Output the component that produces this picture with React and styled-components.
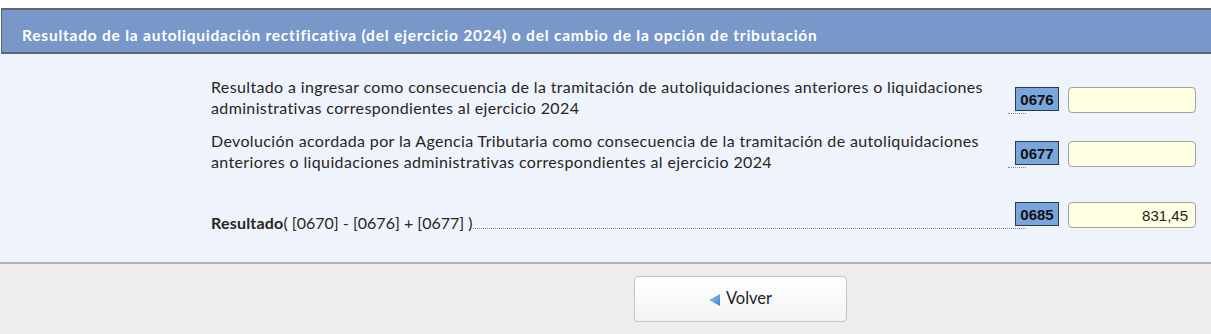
import React from "react";
import styled, { createGlobalStyle } from "styled-components";

const Global = createGlobalStyle`
  html, body { margin: 0; padding: 0; background: #ffffff; }
  body { font-family: Lato, "Liberation Sans", sans-serif; color: #262626; }
`;

const Page = styled.div`
  width: 1211px;
  height: 334px;
  padding-top: 8px;
  box-sizing: border-box;
  display: flex;
  flex-direction: column;
  overflow: hidden;
`;

const Header = styled.div`
  margin-left: 1px;
  height: 46px;
  box-sizing: border-box;
  display: flex;
  align-items: center;
  padding: 7px 0 0 20px;
  background: #7997c9;
  border-top: 2px solid #5e6676;
  border-bottom: 2px solid #5e6676;
  border-left: 1px solid #5e6676;
  color: #ffffff;
  font-weight: 700;
  font-size: 15.5px;
  letter-spacing: 0.78px;
  white-space: nowrap;
`;

const Body = styled.div`
  background: #eff3fb;
  padding: 22px 15px 29px 211px;
  display: flex;
  flex-direction: column;
`;

const Row = styled.div`
  display: flex;
  align-items: flex-end;
  margin-top: ${(p) => p.$top || 0}px;
`;

const Description = styled.div`
  flex: 0 1 auto;
  max-width: 797px;
  font-size: 16px;
  line-height: 21px;
  letter-spacing: ${(p) => (p.$tight ? 0 : 0.36)}px;
`;

const Strong = styled.span`
  font-weight: 700;
  letter-spacing: 0.2px;
`;

const Leader = styled.div`
  flex: 1 1 auto;
  min-width: 18px;
  margin-bottom: 4px;
  border-bottom: 1px dotted #8a8a8a;
`;

const Code = styled.div`
  position: relative;
  margin-left: -11px;
  margin-bottom: 7px;
  width: 44px;
  height: 24px;
  box-sizing: border-box;
  border: 1px solid #2e3a4a;
  background: #79a6dc;
  color: #111111;
  font-family: "Liberation Sans", Arial, sans-serif;
  font-weight: 700;
  font-size: 15px;
  display: flex;
  align-items: center;
  justify-content: center;
`;

const Field = styled.div`
  margin-left: 9px;
  margin-bottom: 5px;
  width: 128px;
  height: 26px;
  box-sizing: border-box;
  border: 1px solid #a3a3a3;
  border-radius: 4px;
  background: #ffffe1;
  padding: 0 7px;
  display: flex;
  align-items: center;
  justify-content: flex-end;
  font-family: "Liberation Sans", Arial, sans-serif;
  font-size: 15px;
  color: #1e1e1e;
`;

const Footer = styled.div`
  flex: 1;
  background: #ededed;
  border-top: 2px solid #b3b3b3;
  padding: 12px 0 0 634px;
`;

const Button = styled.button`
  width: 213px;
  height: 46px;
  border: 1px solid #c4c4c4;
  border-radius: 4px;
  background: linear-gradient(#ffffff, #f3f3f3);
  display: flex;
  align-items: center;
  justify-content: center;
  gap: 6px;
  font-family: Lato, "Liberation Sans", sans-serif;
  font-size: 16.5px;
  color: #1f1f1f;
  padding: 0 0 2px 0;
  cursor: pointer;
`;

const Arrow = () => (
  <svg width="11" height="12" viewBox="0 0 11 12" style={{ marginTop: 3 }}>
    <defs>
      <linearGradient id="ag" x1="0" y1="0" x2="1" y2="1">
        <stop offset="0" stopColor="#9cc8f0" />
        <stop offset="1" stopColor="#3a84cf" />
      </linearGradient>
    </defs>
    <polygon points="0,6 11,0 11,12" fill="url(#ag)" />
  </svg>
);

const rows = [
  {
    code: "0676",
    text: "Resultado a ingresar como consecuencia de la tramitación de autoliquidaciones anteriores o liquidaciones administrativas correspondientes al ejercicio 2024",
    value: "",
    top: 0,
  },
  {
    code: "0677",
    text: "Devolución acordada por la Agencia Tributaria como consecuencia de la tramitación de autoliquidaciones anteriores o liquidaciones administrativas correspondientes al ejercicio 2024",
    value: "",
    top: 12,
  },
];

export default function App() {
  return (
    <>
      <Global />
      <Page>
        <Header>
          Resultado de la autoliquidación rectificativa (del ejercicio 2024) o del cambio de la opción de tributación
        </Header>
        <Body>
          {rows.map((r) => (
            <Row key={r.code} $top={r.top}>
              <Description>{r.text}</Description>
              <Leader />
              <Code>{r.code}</Code>
              <Field>{r.value}</Field>
            </Row>
          ))}
          <Row $top={30}>
            <Description $tight>
              <Strong>Resultado</Strong>( [0670] - [0676] + [0677] )
            </Description>
            <Leader />
            <Code>0685</Code>
            <Field>831,45</Field>
          </Row>
        </Body>
        <Footer>
          <Button>
            <Arrow />
            Volver
          </Button>
        </Footer>
      </Page>
    </>
  );
}
